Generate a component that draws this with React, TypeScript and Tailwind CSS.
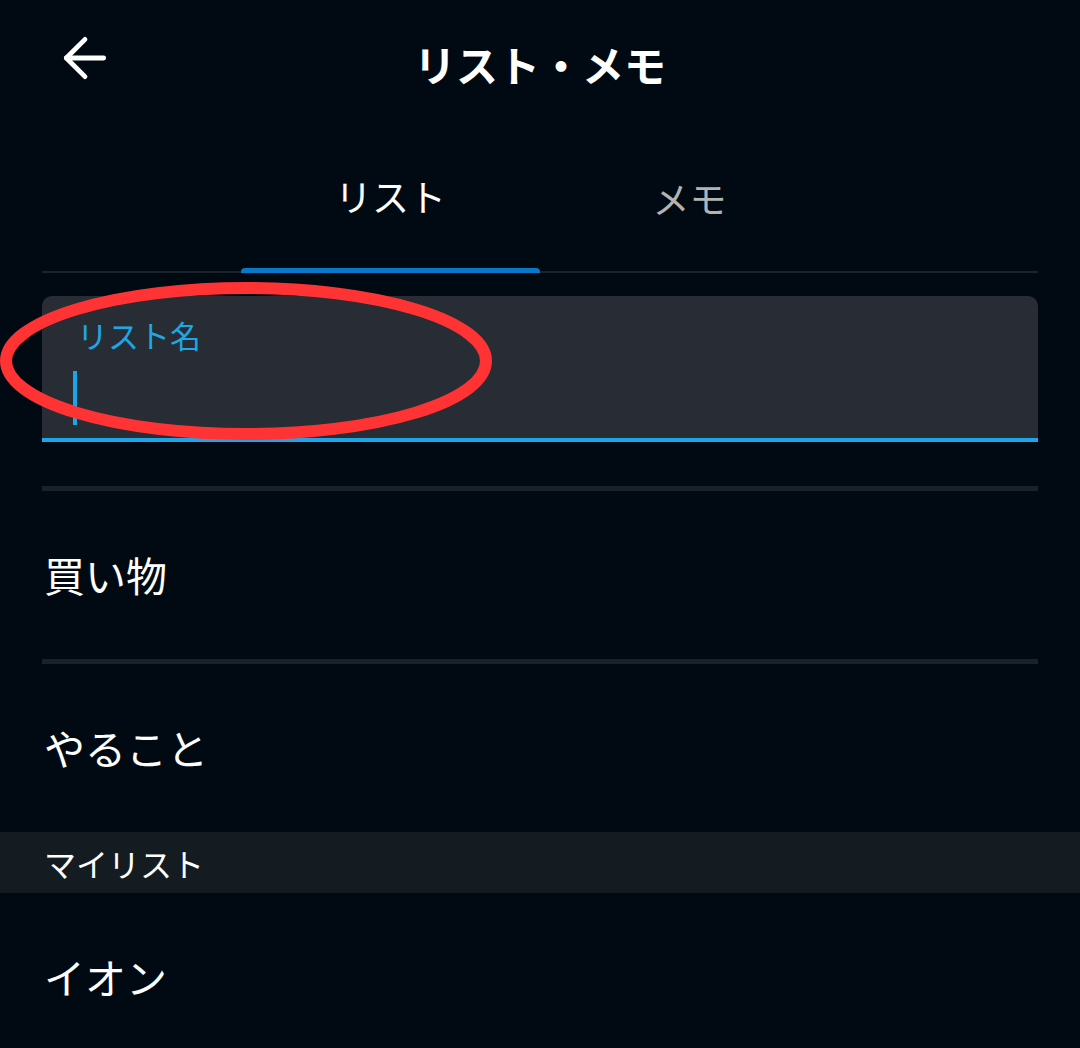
import { ArrowLeft } from "lucide-react";

const font = { fontFamily: '"Noto Sans CJK JP", "Noto Sans", sans-serif' };

function Divider() {
  return <div className="mx-[42px] h-[5px] bg-[#1a2128]" />;
}

function ListRow({ label }: { label: string }) {
  return (
    <div className="flex h-[168px] items-center px-[44px] text-[41px] text-white">{label}</div>
  );
}

export default function App() {
  return (
    <div className="relative h-[1048px] w-[1080px] overflow-hidden bg-[#010a13]" style={font}>
      {/* header */}
      <div className="relative flex h-[126px] items-center justify-center">
        <button className="absolute left-[53px] top-[26px] text-white">
          <ArrowLeft size={64} strokeWidth={1.8} />
        </button>
        <h1 className="text-[42px] font-bold text-white">リスト・メモ</h1>
      </div>

      {/* tabs */}
      <div className="mx-[42px] border-b-2 border-[#1c232b]">
        <div className="flex justify-center">
          <div className="flex h-[145px] w-[299px] flex-col">
            <div className="flex flex-1 items-center justify-center text-[37px] text-white">リスト</div>
            <div className="-mb-[2px] h-[5px] rounded-t-sm bg-[#0a78c8]" />
          </div>
          <div className="flex h-[145px] w-[299px] items-center justify-center text-[37px] text-[#b3b3b3]">
            メモ
          </div>
        </div>
      </div>

      {/* input */}
      <div className="mx-[42px] mt-[23px] h-[146px] rounded-t-[10px] border-b-[4px] border-[#1aa7ea] bg-[#282c34] px-[35px] pt-[19px]">
        <div className="text-[31px] leading-[40px] text-[#1ea7e4]">リスト名</div>
        <div className="ml-[-4px] mt-[16px] h-[54px] w-[4px] bg-[#1aa7ea]" />
      </div>

      <div className="mt-[44px]">
        <Divider />
        <ListRow label="買い物" />
        <Divider />
        <ListRow label="やること" />
        <div className="flex h-[61px] items-center bg-[#141c22] px-[44px] text-[32px] text-white">マイリスト</div>
        <ListRow label="イオン" />
      </div>

      {/* annotation */}
      <svg className="pointer-events-none absolute left-0 top-0" width="1080" height="1048">
        <ellipse cx="246" cy="361" rx="240" ry="73" fill="none" stroke="#ff3333" strokeWidth="12" />
      </svg>
    </div>
  );
}
